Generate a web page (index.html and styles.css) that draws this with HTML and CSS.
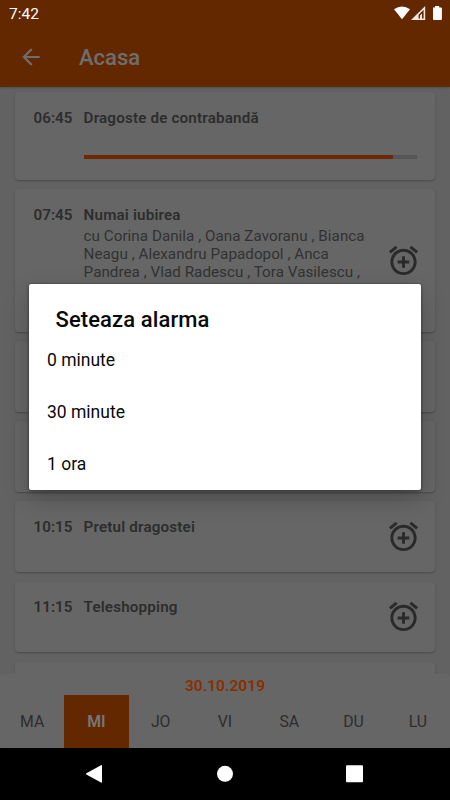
FILE: index.html
```html
<!DOCTYPE html>
<html lang="ro">
<head>
<meta charset="utf-8">
<title>Acasa</title>
<link rel="stylesheet" href="styles.css">
</head>
<body>
<svg width="0" height="0" class="defs">
  <symbol id="alarm" viewBox="0 0 24 24">
    <path d="M7.88 3.39L6.6 1.86 2 5.71l1.29 1.53 4.59-3.85zM22 5.72l-4.6-3.86-1.29 1.53 4.6 3.86L22 5.72zM12 4c-4.97 0-9 4.03-9 9s4.02 9 9 9c4.97 0 9-4.03 9-9s-4.03-9-9-9zm0 16c-3.87 0-7-3.13-7-7s3.13-7 7-7 7 3.13 7 7-3.13 7-7 7zm1-11h-2v3H8v2h3v3h2v-3h3v-2h-3V9z"/>
  </symbol>
</svg>
<div class="screen">
  <header class="top">
    <div class="status">
      <span class="clock">7:42</span>
      <svg class="status-icons" width="50" height="16" viewBox="0 0 50 16">
        <path d="M0 3.3Q8-2.4 16 3.3L8 13.2Z"/>
        <path fill-rule="evenodd" d="M17 13.9L31.2 0V13.9ZM24.6 12.4H29.6V3.8L24.6 8.8ZM26 12.4V9.4L28 7.4V12.4Z" class="signal"/>
        <path d="M39 1.5H41V0H45.2V1.5H47Q47.9 1.5 47.9 2.4V13.1Q47.9 14 47 14H39.9Q39 14 39 13.1V2.4Z"/>
      </svg>
    </div>
    <div class="toolbar">
      <svg class="back" width="26" height="26" viewBox="0 0 24 24"><path d="M20 11H7.83l5.59-5.59L12 4l-8 8 8 8 1.41-1.41L7.83 13H20v-2z"/></svg>
      <h1>Acasa</h1>
    </div>
  </header>

  <main class="list">
    <article class="card now">
      <time>06:45</time>
      <div class="info"><h2>Dragoste de contrabandă</h2><div class="progress"><div class="fill"></div></div></div>
    </article>
    <article class="card tall">
      <time>07:45</time>
      <div class="info"><h2>Numai iubirea</h2><p>cu Corina Danila , Oana Zavoranu , Bianca<br>Neagu , Alexandru Papadopol , Anca<br>Pandrea , Vlad Radescu , Tora Vasilescu ,</p></div>
      <svg class="alarm"><use href="#alarm"/></svg>
    </article>
    <article class="card"></article>
    <article class="card"></article>
    <article class="card">
      <time>10:15</time>
      <div class="info"><h2>Pretul dragostei</h2></div>
      <svg class="alarm"><use href="#alarm"/></svg>
    </article>
    <article class="card">
      <time>11:15</time>
      <div class="info"><h2>Teleshopping</h2></div>
      <svg class="alarm"><use href="#alarm"/></svg>
    </article>
    <article class="card"></article>
  </main>

  <section class="days">
    <div class="date">30.10.2019</div>
    <div class="tabs">
      <span>MA</span><span class="active">MI</span><span>JO</span><span>VI</span><span>SA</span><span>DU</span><span>LU</span>
    </div>
  </section>

  <nav class="system">
    <svg width="450" height="52" viewBox="0 0 450 52">
      <path d="M86.4 25.2L101 17.2Q102 16.7 102 17.8V34Q102 35.1 101 34.6L86.4 26.4Q85.4 25.8 86.4 25.2Z"/>
      <circle cx="225" cy="25.8" r="8"/>
      <rect x="346" y="17.2" width="17" height="17" rx="1"/>
    </svg>
  </nav>

  <div class="dialog">
    <h3>Seteaza alarma</h3>
    <ul><li>0 minute</li><li>30 minute</li><li>1 ora</li></ul>
  </div>
</div>
</body>
</html>
```
FILE: styles.css
```css
* { box-sizing: border-box; margin: 0; padding: 0; }
body { font-family: Roboto, "Noto Sans", sans-serif; color: #2d2d2d; }
.defs { position: absolute; }
.screen {
  position: relative;
  width: 450px;
  height: 800px;
  overflow: hidden;
  display: flex;
  flex-direction: column;
  background: #626262;
}
.top {
  flex: none;
  height: 87px;
  background: #642800;
  box-shadow: 0 1px 2px rgba(0, 0, 0, .2);
}
.status {
  height: 28px;
  padding: 6px 6px 0 9px;
  display: flex;
  justify-content: space-between;
  color: #fff;
}
.clock { font-size: 15.5px; line-height: 16px; }
.status-icons { fill: #fff; }
.signal { fill: #efe6e0; }
.toolbar { height: 58px; display: flex; align-items: center; padding-left: 18px; }
.back { fill: #6e6e6e; }
.toolbar h1 {
  margin-left: 35px;
  padding-top: 1px;
  font-size: 22px;
  font-weight: 500;
  line-height: 28px;
  color: #6e6e6e;
}
.list {
  flex: 1;
  min-height: 0;
  overflow: hidden;
  padding: 4.8px 14.6px 0;
  display: flex;
  flex-direction: column;
  gap: 9.2px;
}
.card {
  flex: none;
  height: 70.9px;
  padding: 16.6px 15px 0 19px;
  display: flex;
  background: #666;
  border-radius: 4px;
  box-shadow: 0 1px 2px rgba(0, 0, 0, .26);
}
.now { height: 88.3px; padding-top: 17.2px; }
.tall { height: 142.8px; }
.card time {
  flex: none;
  width: 50px;
  font-size: 15.2px;
  font-weight: 600;
  line-height: 18px;
}
.info { flex: 1; min-width: 0; white-space: nowrap; }
.info h2 { font-size: 15.2px; font-weight: 600; line-height: 18px; letter-spacing: .17px; }
.info p { margin-top: 4px; font-size: 15.2px; line-height: 17.9px; font-weight: 400; letter-spacing: .04px; color: #323232; }
.progress { width: 333px; height: 4.6px; margin-top: 27.8px; background: #565656; }
.fill { width: 93%; height: 100%; background: #6e2900; }
.alarm { flex: none; width: 35px; height: 35px; fill: #2a2a2a; margin-top: .7px; margin-right: -.5px; }
.tall .alarm { margin-top: 37.2px; }
.days {
  flex: none;
  height: 74px;
  background: #666;
  border-radius: 3px;
}
.date {
  height: 21.3px;
  padding-top: 2px;
  text-align: center;
  font-size: 15.4px;
  font-weight: 600;
  line-height: 20px;
  letter-spacing: .1px;
  color: #882f00;
}
.tabs { display: grid; grid-template-columns: repeat(7, 1fr); height: 52.7px; }
.tabs span { font-size: 15.8px; line-height: 53px; text-align: center; }
.tabs .active { background: #642800; color: #777; font-weight: 600; }
.system { flex: none; height: 52.3px; background: #000; }
.system svg { display: block; fill: #fff; }
.dialog {
  position: absolute;
  left: 29px;
  top: 283.7px;
  width: 392px;
  height: 206px;
  padding: 22px 18px 0;
  background: #fff;
  border-radius: 2px;
  color: #0a0a0a;
  box-shadow: 0 0 2px rgba(0, 0, 0, .5), 0 9px 24px rgba(0, 0, 0, .22), 0 2px 4px rgba(0, 0, 0, .2);
}
.dialog h3 { margin-left: 8.5px; font-size: 22px; font-weight: 500; line-height: 27px; letter-spacing: .1px; }
.dialog ul { list-style: none; margin-top: 1px; }
.dialog li { height: 52px; font-size: 17.5px; line-height: 52px; }
```
